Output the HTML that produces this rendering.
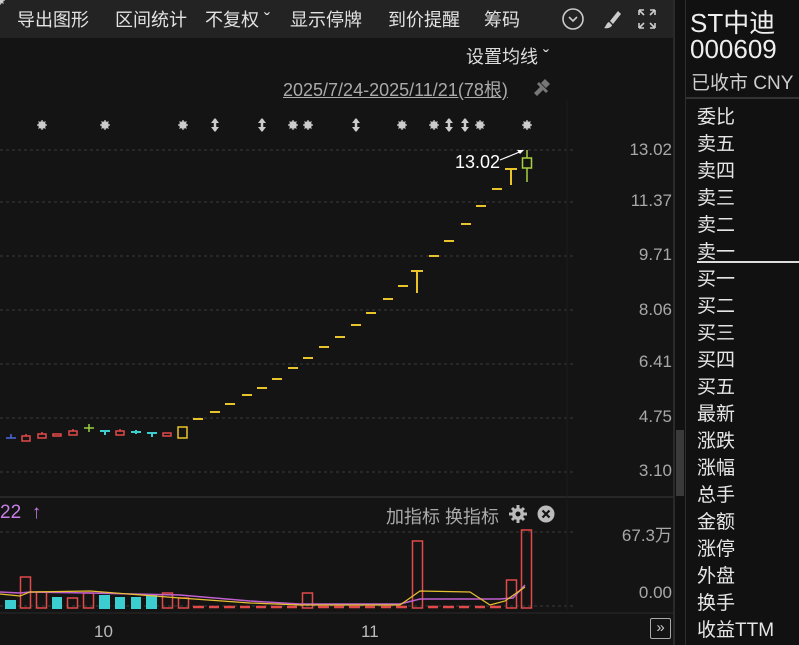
<!DOCTYPE html>
<html><head><meta charset="utf-8"><style>
*{margin:0;padding:0;box-sizing:border-box}
body{width:799px;height:645px;background:#141414;overflow:hidden;position:relative;font-family:"Liberation Sans","Noto Sans CJK SC",sans-serif;color:#ddd}
.a{position:absolute;white-space:nowrap}
#tb{position:absolute;left:0;top:0;width:673px;height:38px;background:#232323}
#tb span{position:absolute;top:6px;font-size:18px;color:#e2e2e2}
.rl{position:absolute;left:697px;font-size:19px;color:#e6e6e6}
.ax{position:absolute;font-size:17px;color:#a8a8a8;text-align:right;width:62px;left:610px}
</style></head><body>
<div id="tb">
<span style="left:17px">导出图形</span>
<span style="left:115px">区间统计</span>
<span style="left:205px">不复权 ˇ</span>
<span style="left:290px">显示停牌</span>
<span style="left:388px">到价提醒</span>
<span style="left:484px">筹码</span>
<svg class="a" style="left:560px;top:7px" width="110" height="26">
<circle cx="13" cy="12" r="10" fill="none" stroke="#ccc" stroke-width="1.6"/><path d="M9 10l4 4 4-4" fill="none" stroke="#ccc" stroke-width="1.6"/>
<path d="M58 4l-8 10 3 3 8-10z" fill="#ccc"/><path d="M49 15c-3 1-3 5-5 6 4 1 8-1 8-3z" fill="#ccc"/>
<path d="M79 3h5M79 3v5M79 3l5 5M95 3h-5M95 3v5M95 3l-5 5M79 21h5M79 21v-5M79 21l5-5M95 21h-5M95 21v-5M95 21l-5-5" stroke="#ccc" stroke-width="1.6" fill="none"/>
</svg>
</div>
<div class="a" style="left:673px;top:0;width:2px;height:645px;background:#2a2a2a"></div>
<div class="a" style="left:675px;top:0;width:124px;height:645px;background:#111"></div>
<div class="a" style="left:676px;top:430px;width:8px;height:66px;background:#3a3a3a"></div>
<div class="a" style="left:685px;top:0;width:1px;height:645px;background:#2e2e2e"></div>
<div class="a" style="left:690px;top:3px;font-size:26px;color:#eee">ST中迪</div>
<div class="a" style="left:690px;top:34px;font-size:26px;color:#eee">000609</div>
<div class="a" style="left:691px;top:68px;font-size:19px;color:#ccc">已收市 CNY</div>
<div class="a" style="left:686px;top:97px;width:113px;height:2px;background:#333"></div>
<div class="rl" style="top:102px">委比</div><div class="rl" style="top:129px">卖五</div><div class="rl" style="top:156px">卖四</div><div class="rl" style="top:183px">卖三</div><div class="rl" style="top:210px">卖二</div><div class="rl" style="top:237px">卖一</div>
<div class="a" style="left:697px;top:261px;width:102px;height:2px;background:#ddd"></div>
<div class="rl" style="top:264px">买一</div><div class="rl" style="top:291px">买二</div><div class="rl" style="top:318px">买三</div><div class="rl" style="top:345px">买四</div><div class="rl" style="top:372px">买五</div><div class="rl" style="top:399px">最新</div><div class="rl" style="top:426px">涨跌</div><div class="rl" style="top:453px">涨幅</div><div class="rl" style="top:480px">总手</div><div class="rl" style="top:507px">金额</div><div class="rl" style="top:534px">涨停</div><div class="rl" style="top:561px">外盘</div><div class="rl" style="top:588px">换手</div><div class="rl" style="top:615px">收益TTM</div>
<div class="a" style="left:466px;top:43px;font-size:18px;color:#ddd">设置均线 ˇ</div>
<div class="a" style="left:283px;top:76px;font-size:18px;color:#aaa;text-decoration:underline">2025/7/24-2025/11/21(78根)</div>
<div class="ax" style="top:140px">13.02</div><div class="ax" style="top:191px">11.37</div><div class="ax" style="top:245px">9.71</div><div class="ax" style="top:300px">8.06</div><div class="ax" style="top:352px">6.41</div><div class="ax" style="top:407px">4.75</div><div class="ax" style="top:461px">3.10</div>
<div class="ax" style="top:521px">67.3万</div><div class="ax" style="top:583px">0.00</div>
<div class="a" style="left:455px;top:152px;font-size:18px;color:#fff">13.02</div>
<div class="a" style="left:0;top:502px;font-size:19px;color:#c77ee6">22 &nbsp;↑</div>
<div class="a" style="left:386px;top:503px;font-size:18px;color:#aaa">加指标 换指标</div>
<div class="a" style="left:94px;top:622px;font-size:17px;color:#bbb">10</div>
<div class="a" style="left:361px;top:622px;font-size:17px;color:#bbb">11</div>
<div class="a" style="left:650px;top:618px;width:21px;height:21px;border:1px solid #aaa;border-radius:2px;font-size:15px;color:#ccc;text-align:center;line-height:18px">»</div>
<svg class="a" style="left:0;top:0" width="673" height="645">
<g stroke="#3a3a3a" stroke-dasharray="3 3" stroke-width="1">
<path d="M0 150H575M0 202H575M0 256H575M0 310H575M0 364H575M0 418H575M0 472H575M0 532H575M0 606H575"/></g>
<path d="M0 497H673" stroke="#3a3a3a"/>
<path d="M567 100V497M567 500V610" stroke="#1c1c1c"/>
<path d="M0 613H673" stroke="#2a2a2a"/>
<path d="M534 93l6-6-3-3 2-2 9 9-2 2-3-3-6 6z M541 83l4-4 5 5-4 4z" fill="#777"/>
<g fill="#ccc" stroke="#ccc" stroke-width="1.2">
<g id="st"><circle cx="0" cy="0" r="3.2"/><path d="M-5 0h10M0-5v10M-3.5-3.5l7 7M3.5-3.5l-7 7"/></g>
</g>
<g fill="#ccc" stroke="#ccc" stroke-width="1.2">
<use href="#st" x="42" y="125"/><use href="#st" x="105" y="125"/><use href="#st" x="183" y="125"/><use href="#st" x="293" y="125"/><use href="#st" x="308" y="125"/><use href="#st" x="402" y="125"/><use href="#st" x="434" y="125"/><use href="#st" x="480" y="125"/><use href="#st" x="527" y="125"/>
</g>
<g stroke="#ccc" stroke-width="2.5" fill="#ccc">
<path d="M215 119v12M262 119v12M356 119v12M449 119v12M465 119v12"/>
<path d="M211 123l4-5 4 5zM211 127l4 5 4-5zM258 123l4-5 4 5zM258 127l4 5 4-5zM352 123l4-5 4 5zM352 127l4 5 4-5zM445 123l4-5 4 5zM445 127l4 5 4-5zM461 123l4-5 4 5zM461 127l4 5 4-5z" stroke="none"/>
</g>
<g stroke="#e8c42a" stroke-width="2" fill="none">
<path d="M193 419h10M210 412h10M225 404h10M242 395h10M257 388h10M272 379h10M288 368h10M303 358h10M319 347h10M335 337h10M351 325h10M366 313h10M383 299h10M398 286h10M429 256h10M444 241h10M461 224h10M476 206h10M492 189h10"/>
<path d="M411 271h12M417 271v22M505 169h12M511 169v16"/>
<rect x="178" y="427" width="9" height="11" stroke-width="1.5"/>
</g>
<g stroke="#a8d040" stroke-width="1.5" fill="none"><path d="M527 150v8M527 168v14"/><rect x="522.5" y="158" width="9" height="10"/></g>
<path d="M500 160l22-9" stroke="#fff" stroke-width="1.2"/><path d="M524 150l-7 0 3 4z" fill="#fff"/>
<g stroke="#e24a4a" stroke-width="1.5" fill="none">
<rect x="22" y="436" width="8" height="5"/><rect x="38" y="434" width="8" height="4"/><rect x="53" y="434" width="8" height="2"/><rect x="69" y="431" width="8" height="4"/><rect x="116" y="431" width="8" height="4"/><rect x="163" y="433" width="8" height="3"/>
<path d="M26 434v2M42 432v2M73 429v2M120 429v2"/>
</g>
<g stroke="#3bcdd0" stroke-width="2"><path d="M100 431h10M105 431v4M131 432h10M136 430v4M147 433h10M152 433v4"/></g>
<path d="M84 428h10M89 424v8" stroke="#9ad040" stroke-width="1.5"/>
<path d="M6 438h10M11 434v4" stroke="#4a6ae0" stroke-width="1.5"/>
<g fill="#3bcdd0"><rect x="5" y="600" width="11" height="9"/><rect x="52" y="597" width="10" height="12"/><rect x="99" y="595" width="11" height="14"/><rect x="115" y="597" width="10" height="12"/><rect x="131" y="597" width="10" height="12"/><rect x="146" y="595" width="11" height="14"/></g>
<g stroke="#e24a4a" stroke-width="1.5" fill="none">
<rect x="20.5" y="577" width="10" height="31"/><rect x="36.5" y="592" width="10" height="16"/><rect x="67.5" y="598" width="10" height="10"/><rect x="83.5" y="593" width="10" height="15"/><rect x="162.5" y="593" width="10" height="15"/><rect x="178.5" y="598" width="10" height="10"/><rect x="302.5" y="593" width="10" height="15"/><rect x="412.5" y="541" width="10" height="67"/><rect x="506.5" y="580" width="10" height="28"/><rect x="521.5" y="530" width="10" height="78"/>
<path d="M193 607h11M209 607h10M224 607h11M240 607h10M256 607h10M271 607h11M287 607h10M318 607h11M334 607h10M349 607h11M365 607h10M381 607h10M396 607h11M428 607h10M443 607h11M459 607h10M475 607h10M490 607h11" stroke-width="2.5"/>
</g>
<path d="M0 592L20 593L30 592L90 593L180 595L250 601L300 604L400 604L420 599L500 599L513 598L525 585" stroke="#c060d0" stroke-width="1.5" fill="none"/>
<path d="M0 594L20 596L30 592L90 591L180 598L250 603L300 605L400 605L420 591L470 592L490 605L505 601L525 587" stroke="#e8c030" stroke-width="1.2" fill="none"/>
<g transform="translate(518 514)"><circle r="6" fill="#bbb"/><path d="M0-9v18M-9 0h18M-6-6l12 12M6-6l-12 12" stroke="#bbb" stroke-width="3"/><circle r="2.5" fill="#141414"/></g>
<circle cx="546" cy="514" r="8.5" fill="#bbb"/><path d="M542.5 510.5l7 7M549.5 510.5l-7 7" stroke="#141414" stroke-width="2.2"/>
</svg>
</body></html>
